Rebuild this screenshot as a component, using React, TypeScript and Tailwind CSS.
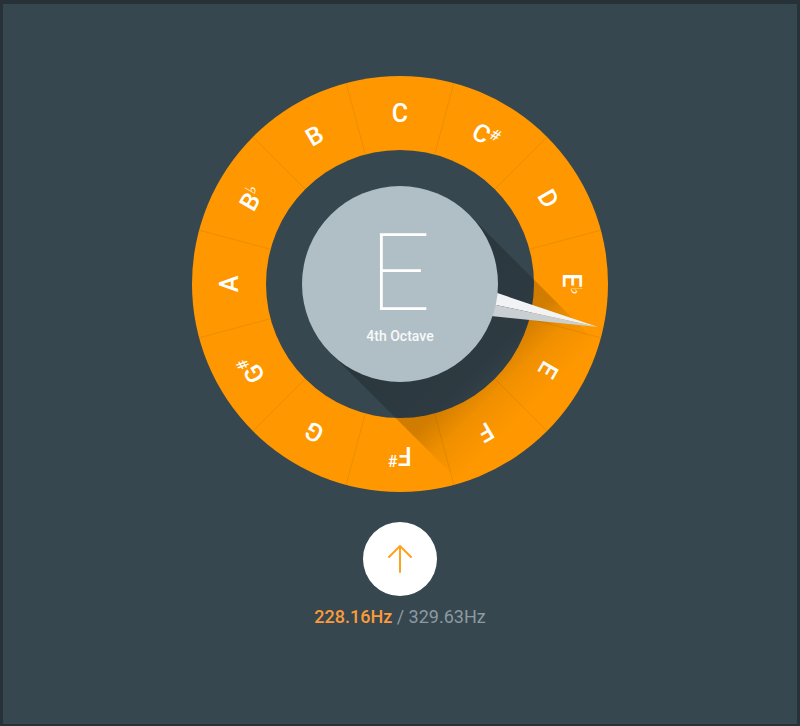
const NOTES: { name: string; acc?: string }[] = [
  { name: "C" },
  { name: "C", acc: "#" },
  { name: "D" },
  { name: "E", acc: "♭" },
  { name: "E" },
  { name: "F" },
  { name: "F", acc: "#" },
  { name: "G" },
  { name: "G", acc: "#" },
  { name: "A" },
  { name: "B", acc: "♭" },
  { name: "B" },
];

const CX = 210;
const CY = 210;
const R_OUT = 208;
const R_IN = 134;
const R_FACE = 98;
const R_LABEL = 171;

function polar(r: number, deg: number) {
  const a = ((deg - 90) * Math.PI) / 180;
  return [CX + r * Math.cos(a), CY + r * Math.sin(a)];
}

function Dial() {
  return (
    <div className="relative w-[420px] h-[420px]">
      <svg width="420" height="420" viewBox="0 0 420 420" className="block">
        <defs>
          <clipPath id="dial-clip">
            <circle cx={CX} cy={CY} r={R_OUT} />
          </clipPath>
          <linearGradient id="long-shadow" gradientUnits="userSpaceOnUse" x1="210" y1="210" x2="392" y2="392">
            <stop offset="0" stopColor="#000" stopOpacity="0.24" />
            <stop offset="0.45" stopColor="#000" stopOpacity="0.18" />
            <stop offset="0.56" stopColor="#000" stopOpacity="0.06" />
            <stop offset="0.7" stopColor="#000" stopOpacity="0" />
          </linearGradient>
        </defs>

        {/* orange ring */}
        <circle cx={CX} cy={CY} r={R_OUT} fill="#ff9800" />
        {Array.from({ length: 12 }).map((_, i) => {
          const deg = i * 30 + 15;
          const [x1, y1] = polar(R_IN, deg);
          const [x2, y2] = polar(R_OUT, deg);
          return <line key={i} x1={x1} y1={y1} x2={x2} y2={y2} stroke="#ec8d00" strokeWidth="1" />;
        })}
        <circle cx={CX} cy={CY} r={R_IN} fill="#37474f" />

        {/* note labels */}
        {NOTES.map((note, i) => {
          const deg = i * 30;
          return (
            <text
              key={i}
              x={CX}
              y={CY - R_LABEL}
              transform={`rotate(${deg} ${CX} ${CY})`}
              textAnchor="middle"
              dominantBaseline="central"
              fill="#fff"
              fontFamily="Roboto, 'DejaVu Sans', sans-serif"
              fontWeight={500}
              fontSize="25"
            >
              {note.name}
              {note.acc && (
                <tspan fontSize="16" dy="-6">
                  {note.acc}
                </tspan>
              )}
            </text>
          );
        })}

        {/* long shadow */}
        <polygon
          points="279.3,140.7 140.7,279.3 353,491 491,353"
          fill="url(#long-shadow)"
          clipPath="url(#dial-clip)"
        />

        {/* needle */}
        <polygon points="215,188 408,253 210,210" fill="#f1f3f4" />
        <polygon points="210,210 408,253 205,232" fill="#c9cfd2" />

        {/* face */}
        <circle cx={CX} cy={CY} r={R_FACE} fill="#b0bec5" />
      </svg>

      {/* current note */}
      <div className="absolute inset-0 flex flex-col items-center pt-[162px] text-white">
        <span className="text-[107px] leading-[76px] font-thin">E</span>
        <span className="mt-[16px] text-[14px] leading-[16px] font-medium text-white/90">4th Octave</span>
      </div>
    </div>
  );
}

export default function App() {
  return (
    <div className="w-full h-[726px] bg-[#37474f] border-t-4 border-l-[3px] border-r-[3px] border-b-2 border-[#263238] font-['Roboto','Liberation_Sans',sans-serif]">
      <main className="flex flex-col items-center pt-[70px]">
        <Dial />

        <button className="mt-[28px] w-[74px] h-[74px] rounded-full bg-white flex items-center justify-center">
          <svg width="26" height="30" viewBox="0 0 26 30" fill="none">
            <path d="M13 28V3M2 13 13 2l11 11" stroke="#ffa21f" strokeWidth="2" strokeLinecap="round" strokeLinejoin="round" />
          </svg>
        </button>

        <p className="mt-[10px] text-[18px] leading-[22px]">
          <span className="text-[#fb9b3a] font-medium">228.16Hz</span>
          <span className="text-[#8d9aa1]"> / 329.63Hz</span>
        </p>
      </main>
    </div>
  );
}
